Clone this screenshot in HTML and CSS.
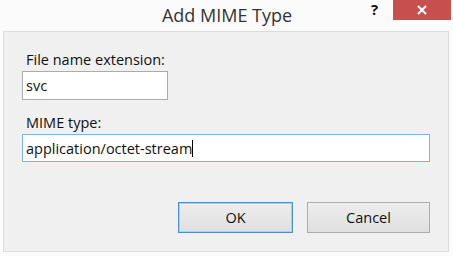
FILE: index.html
```html
<!DOCTYPE html>
<html lang="en">
<head>
    <meta charset="UTF-8">
    <title>Add MIME Type</title>
    <link rel="stylesheet" href="styles.css">
</head>
<body>
    <div class="window">
        <div class="titlebar">
            <div class="title">Add MIME Type</div>
            <div class="help">?</div>
            <div class="close">
                <svg width="10" height="10" viewBox="0 0 10 10">
                    <path d="M1 1 L9 9 M9 1 L1 9" stroke="#fff" stroke-width="2"/>
                </svg>
            </div>
        </div>
        <div class="panel">
            <label class="label">File name extension:</label>
            <div class="field short">svc</div>
            <label class="label">MIME type:</label>
            <div class="field long focused">application/octet-stream<span class="caret"></span></div>
            <div class="buttons">
                <button class="btn default">OK</button>
                <button class="btn cancel">Cancel</button>
            </div>
        </div>
    </div>
</body>
</html>
```

FILE: styles.css
```css
body {
    margin: 0;
    background-color: #fbfbfb;
    font-family: "Open Sans", "Noto Sans", sans-serif;
    color: #111;
}
.window {
    width: 453px;
    height: 256px;
    display: flex;
    flex-direction: column;
}
.titlebar {
    height: 31px;
    position: relative;
}
.title {
    text-align: center;
    font-size: 18px;
    line-height: 30px;
    color: #333;
    padding-left: 1px;
}
.help {
    position: absolute;
    left: 371px;
    top: -1px;
    font-size: 15px;
    font-weight: bold;
    color: #111;
}
.close {
    position: absolute;
    left: 393px;
    top: 0;
    width: 58px;
    height: 20px;
    background-color: #c7504f;
    display: flex;
    align-items: center;
    justify-content: center;
}
.panel {
    margin: 0 4px 4px 3px;
    flex: 1;
    background-color: #f0f0f0;
    border: 1px solid #dcdcdc;
    padding: 19px 18px 0 18px;
    display: flex;
    flex-direction: column;
    align-items: flex-start;
}
.label {
    font-size: 14.5px;
    line-height: 18px;
    padding-left: 4px;
}
.field {
    box-sizing: border-box;
    height: 29px;
    margin-top: 2px;
    background-color: #fff;
    border: 1px solid #ababab;
    font-size: 14.5px;
    line-height: 27px;
    padding-left: 3px;
}
.short {
    width: 146px;
    margin-bottom: 14px;
}
.long {
    width: 408px;
    height: 28px;
}
.focused {
    border-color: #7eb4ea;
}
.caret {
    display: inline-block;
    width: 1px;
    height: 17px;
    background-color: #000;
    vertical-align: -3px;
}
.buttons {
    align-self: flex-end;
    display: flex;
    gap: 14px;
    margin-top: 40px;
}
.btn {
    box-sizing: border-box;
    height: 31px;
    font-family: "Open Sans", "Noto Sans", sans-serif;
    font-size: 14.5px;
    color: #111;
    border: 1px solid #adadad;
    background: linear-gradient(#ededed, #e0e0e0);
    padding: 0;
}
.default {
    width: 115px;
    border: 1px solid #4a90d0;
    box-shadow: inset 0 0 0 1px #a8d0f2;
}
.cancel {
    width: 123px;
}
```
